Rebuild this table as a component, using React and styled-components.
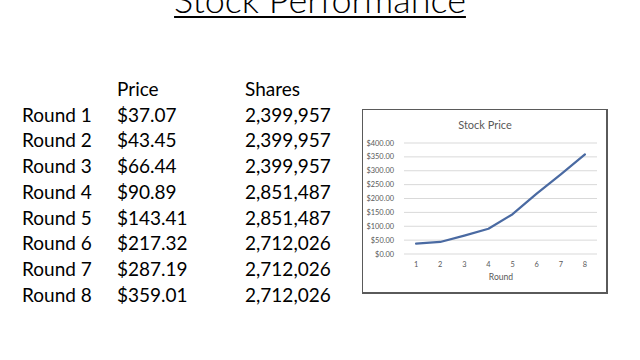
import React from 'react';
import styled, { createGlobalStyle } from 'styled-components';

const GlobalStyle = createGlobalStyle`
  html, body {
    margin: 0;
    padding: 0;
    background: #ffffff;
  }
  body {
    width: 640px;
    height: 360px;
    overflow: hidden;
    font-family: Lato, "Open Sans", "Liberation Sans", sans-serif;
    color: #000;
  }
`;

const Slide = styled.div`
  width: 640px;
  height: 360px;
  overflow: hidden;
`;

const Title = styled.h1`
  margin: -19px 0 0;
  font-size: 36px;
  line-height: 36px;
  font-weight: 300;
  text-align: center;
  text-decoration: underline;
  text-decoration-thickness: 2px;
  text-underline-offset: 3px;
`;

const Body = styled.div`
  display: flex;
  align-items: flex-start;
  padding: 0 0 0 22px;
  margin-top: 59px;
`;

const Table = styled.div`
  display: grid;
  grid-template-columns: 95px 128px 117px;
  font-size: 19px;
  line-height: 25.7px;
`;

const Cell = styled.div`
  white-space: nowrap;
`;

const ChartBox = styled.div`
  margin-top: 33px;
  width: 243px;
  height: 182px;
  border-style: solid;
  border-color: #5a5a5a;
  border-width: 1px 2px 2px 1px;
  background: #fff;
`;

const rows = [
  ['Round 1', '$37.07', '2,399,957', 37.07],
  ['Round 2', '$43.45', '2,399,957', 43.45],
  ['Round 3', '$66.44', '2,399,957', 66.44],
  ['Round 4', '$90.89', '2,851,487', 90.89],
  ['Round 5', '$143.41', '2,851,487', 143.41],
  ['Round 6', '$217.32', '2,712,026', 217.32],
  ['Round 7', '$287.19', '2,712,026', 287.19],
  ['Round 8', '$359.01', '2,712,026', 359.01],
];

const plotLeft = 41;
const plotRight = 234;
const plotTop = 33;
const plotBottom = 144;
const cat = (plotRight - plotLeft) / 8;
const yOf = (v) => plotBottom - (v / 400) * (plotBottom - plotTop);

const StockChart = () => {
  const ticks = [400, 350, 300, 250, 200, 150, 100, 50, 0];
  const pts = rows.map((r, i) => `${plotLeft + cat * (i + 0.5)},${yOf(r[3])}`).join(' ');
  return (
    <svg width="243" height="182" viewBox="0 0 243 182" fontFamily="Lato, 'Open Sans', sans-serif">
      <text x="122" y="19" textAnchor="middle" fontSize="11" fill="#595959">
        Stock Price
      </text>
      {ticks.map((t) => (
        <g key={t}>
          <line x1={plotLeft} x2={plotRight} y1={yOf(t)} y2={yOf(t)} stroke="#d9d9d9" strokeWidth="1" />
          <text x="31" y={yOf(t) + 2.6} textAnchor="end" fontSize="7.4" fill="#595959">
            ${t}.00
          </text>
        </g>
      ))}
      {rows.map((r, i) => (
        <text key={r[0]} x={plotLeft + cat * (i + 0.5)} y="157" textAnchor="middle" fontSize="7.4" fill="#595959">
          {i + 1}
        </text>
      ))}
      <text x="138" y="170" textAnchor="middle" fontSize="8.6" fill="#595959">
        Round
      </text>
      <polyline points={pts} fill="none" stroke="#4a6aa2" strokeWidth="2.2" strokeLinejoin="round" strokeLinecap="round" />
    </svg>
  );
};

const App = () => (
  <Slide>
    <GlobalStyle />
    <Title>Stock Performance</Title>
    <Body>
      <Table>
        <Cell />
        <Cell>Price</Cell>
        <Cell>Shares</Cell>
        {rows.map((r) => (
          <React.Fragment key={r[0]}>
            <Cell>{r[0]}</Cell>
            <Cell>{r[1]}</Cell>
            <Cell>{r[2]}</Cell>
          </React.Fragment>
        ))}
      </Table>
      <ChartBox>
        <StockChart />
      </ChartBox>
    </Body>
  </Slide>
);

export default App;
